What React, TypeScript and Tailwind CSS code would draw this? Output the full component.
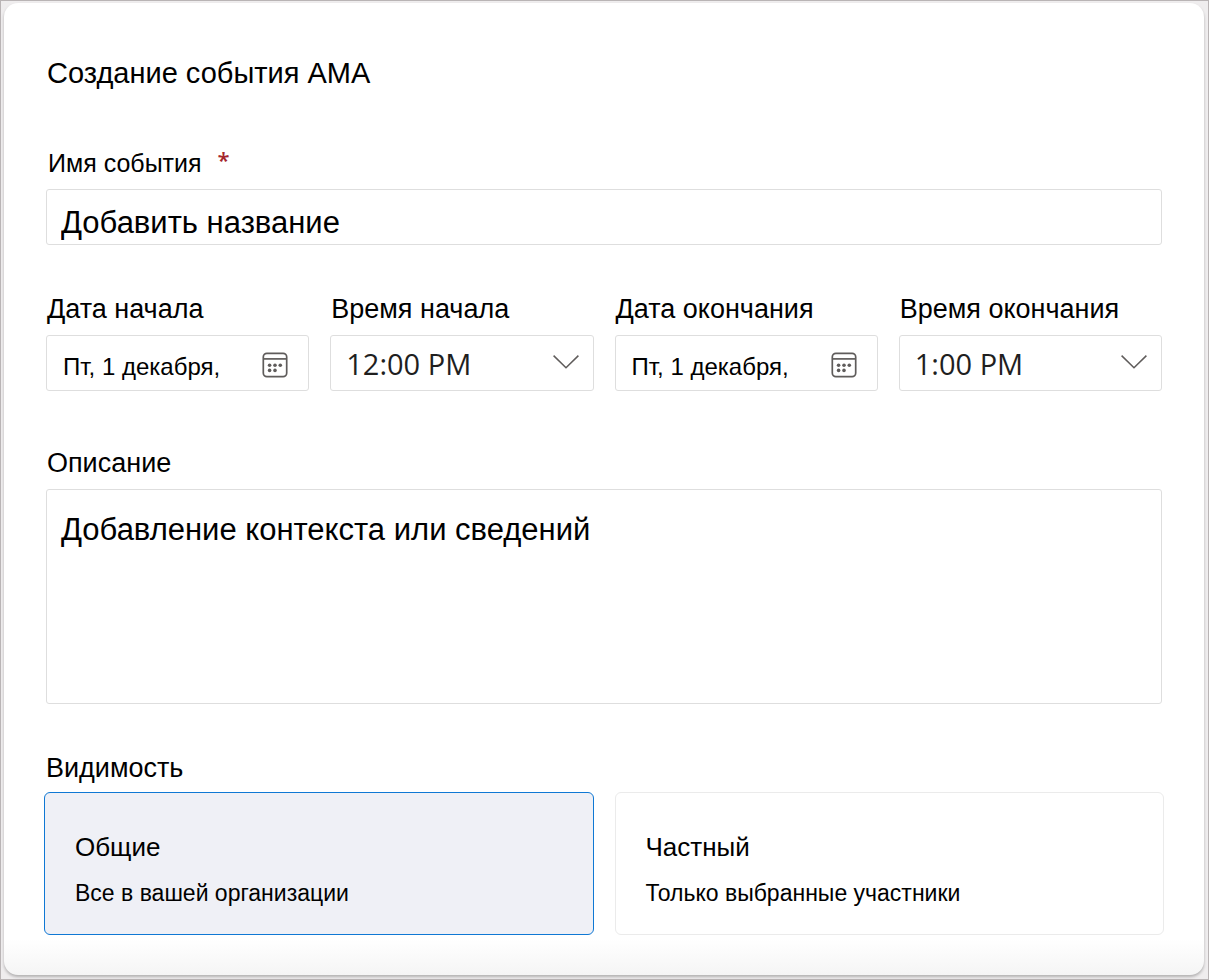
import { useState } from 'react'

const visibilityOptions = [
  { id: 'public', title: 'Общие', description: 'Все в вашей организации' },
  { id: 'private', title: 'Частный', description: 'Только выбранные участники' },
]

const labelClass = 'block text-[27px] leading-8 pl-px'
const boxClass = 'block w-full rounded-[3px] border border-[#dedede] bg-white'

function CalendarIcon() {
  return (
    <svg width="26" height="26" viewBox="0 0 26 26" fill="none" stroke="#5f5c5b" strokeWidth="1.7">
      <rect x="1.3" y="1.3" width="23.4" height="23.4" rx="3.6" />
      <path d="M1.3 6.9h23.4" />
      <g fill="#5f5c5b" stroke="none">
        <circle cx="7.6" cy="13.2" r="1.8" />
        <circle cx="13" cy="13.2" r="1.8" />
        <circle cx="18.3" cy="13.2" r="1.8" />
        <circle cx="7.6" cy="18.4" r="1.8" />
        <circle cx="13" cy="18.4" r="1.8" />
      </g>
    </svg>
  )
}

function ChevronIcon() {
  return (
    <svg width="26" height="14" viewBox="0 0 26 14" fill="none" stroke="#5f5c5b" strokeWidth="1.5" className="pointer-events-none absolute right-[15px] top-5">
      <path d="M0.6 0.6L13 12.8L25.4 0.6" />
    </svg>
  )
}

function DateField({ id, label }: { id: string; label: string }) {
  return (
    <div>
      <label htmlFor={id} className={labelClass}>{label}</label>
      <div className={`${boxClass} mt-2.5 flex h-14 items-center pl-4 pr-5`}>
        <input id={id} type="text" defaultValue="Пт, 1 декабря," className="h-full w-full min-w-0 flex-1 pt-2 text-2xl outline-none" />
        <button type="button" aria-label={label} className="pt-1">
          <CalendarIcon />
        </button>
      </div>
    </div>
  )
}

function TimeField({ id, label, value }: { id: string; label: string; value: string }) {
  return (
    <div>
      <label htmlFor={id} className={labelClass}>{label}</label>
      <div className="relative mt-2.5">
        <select id={id} defaultValue={value} className={`${boxClass} h-14 appearance-none px-[15px] pt-0.5 font-['Open_Sans',sans-serif] text-[29px] text-[#1f1f1f] outline-none`}>
          <option>12:00 PM</option>
          <option>1:00 PM</option>
        </select>
        <ChevronIcon />
      </div>
    </div>
  )
}

export default function App() {
  const [visibility, setVisibility] = useState('public')

  return (
    <div className="min-h-screen border border-[#b9b4b5] bg-[#efedee] pb-[3px] pl-[3px] pr-1 pt-0.5 font-['Liberation_Sans',Arial,sans-serif] text-black">
      <form className="rounded-[14px] bg-white bg-linear-to-t from-[#f5f5f5] to-white to-[36px] px-[42px] pb-10 pt-[50px] shadow-[0_2px_3px_rgba(0,0,0,0.25)]">
        <h1 className="pl-px text-[29px] leading-10">Создание события AMA</h1>

        <div className="mt-[54px]">
          <label htmlFor="event-name" className="flex pl-0.5 text-[25px] leading-8">
            Имя события <span className="ml-4 font-['Open_Sans',sans-serif] text-[22px] font-semibold leading-6 text-[#a4262c]">*</span>
          </label>
          <input id="event-name" type="text" required placeholder="Добавить название" className={`${boxClass} mt-2.5 h-14 px-3.5 pt-3 text-[31px] outline-none placeholder:text-black`} />
        </div>

        <div className="mt-12 grid grid-cols-4 gap-[21px]">
          <DateField id="start-date" label="Дата начала" />
          <TimeField id="start-time" label="Время начала" value="12:00 PM" />
          <DateField id="end-date" label="Дата окончания" />
          <TimeField id="end-time" label="Время окончания" value="1:00 PM" />
        </div>

        <div className="mt-14">
          <label htmlFor="description" className={labelClass}>Описание</label>
          <textarea id="description" placeholder="Добавление контекста или сведений" className={`${boxClass} mt-2.5 h-[215px] resize-none px-3.5 py-5 text-[31px] leading-10 outline-none placeholder:text-black`} />
        </div>

        <fieldset className="-mx-0.5 mt-12">
          <legend className="pl-0.5 text-[27px] leading-8">Видимость</legend>
          <div className="mt-2 grid grid-cols-2 gap-[21px]">
            {visibilityOptions.map((option) => (
              <label
                key={option.id}
                className={`relative block h-[143px] rounded-md border px-[30px] pt-[38px] ${
                  visibility === option.id ? 'border-[#0f78d4] bg-[#eff0f6]' : 'border-[#ebebeb] bg-white'
                }`}
              >
                <input
                  type="radio"
                  name="visibility"
                  value={option.id}
                  checked={visibility === option.id}
                  onChange={() => setVisibility(option.id)}
                  className="absolute inset-0 h-full w-full appearance-none"
                />
                <span className="block text-[26px] leading-8">{option.title}</span>
                <span className="mt-3.5 block text-[23px] leading-8">{option.description}</span>
              </label>
            ))}
          </div>
        </fieldset>
      </form>
    </div>
  )
}
